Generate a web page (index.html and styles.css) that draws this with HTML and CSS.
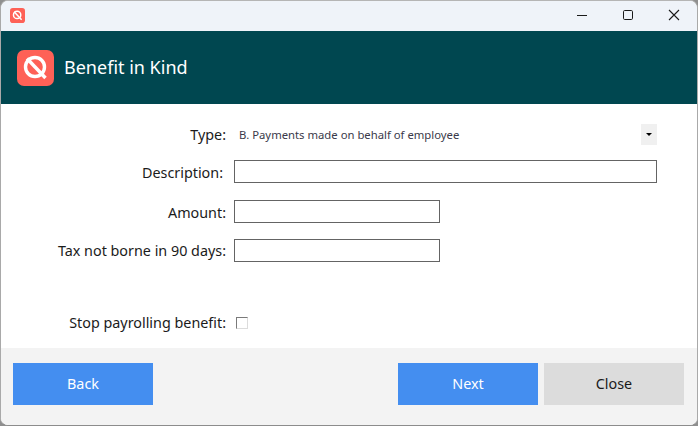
FILE: index.html
```html
<!DOCTYPE html>
<html lang="en">
<head>
<meta charset="utf-8">
<title>Benefit in Kind</title>
<link rel="stylesheet" href="styles.css">
</head>
<body>
<div class="window">
  <div class="titlebar">
    <svg class="app-icon" viewBox="0 0 16 16"><rect width="16" height="16" rx="3" fill="#fe6157"/><circle cx="7.6" cy="7.4" r="3.9" fill="none" stroke="#fff" stroke-width="1.6"/><path d="M4.4 3.9 12.4 12.6" stroke="#fff" stroke-width="1.6"/></svg>
    <div class="controls">
      <svg class="ctl" viewBox="0 0 46 30"><path d="M18 15.5H28" stroke="#1a1a1a" stroke-width="1"/></svg>
      <svg class="ctl" viewBox="0 0 46 30"><rect x="18.5" y="10.5" width="9" height="9" rx="1.2" fill="none" stroke="#1a1a1a" stroke-width="1"/></svg>
      <svg class="ctl" viewBox="0 0 46 30"><path d="M18 10 28 20M28 10 18 20" stroke="#1a1a1a" stroke-width="1.1"/></svg>
    </div>
  </div>
  <header class="banner">
    <svg class="logo" viewBox="0 0 37 36"><rect width="37" height="36" rx="7" fill="#fe6157"/><circle cx="18" cy="17" r="9.5" fill="none" stroke="#fff" stroke-width="3.4"/><path d="M10 8.5 28.5 28" stroke="#fff" stroke-width="3.4"/></svg>
    <h1 class="banner-title">Benefit in Kind</h1>
  </header>
  <main class="form">
    <div class="row row-type">
      <span class="label">Type:</span>
      <div class="select">
        <span class="select-text">B. Payments made on behalf of employee</span>
        <span class="select-arrow"></span>
      </div>
    </div>
    <div class="row row-desc">
      <span class="label label-desc">Description:</span>
      <input class="field field-wide" type="text">
    </div>
    <div class="row row-amount">
      <span class="label">Amount:</span>
      <input class="field field-short" type="text">
    </div>
    <div class="row row-tax">
      <span class="label">Tax not borne in 90 days:</span>
      <input class="field field-short" type="text">
    </div>
    <div class="row row-stop">
      <span class="label label-stop">Stop payrolling benefit:</span>
      <span class="check"></span>
    </div>
  </main>
  <footer class="footer">
    <button class="btn btn-blue" type="button">Back</button>
    <span class="spacer"></span>
    <button class="btn btn-blue" type="button">Next</button>
    <button class="btn btn-grey" type="button">Close</button>
  </footer>
</div>
</body>
</html>
```
FILE: styles.css
```css
* { box-sizing: border-box; }
html, body { margin: 0; height: 100%; background: #8f8f8f; }
body { font-family: "Noto Sans", "Open Sans", sans-serif; color: #1b1b1b; overflow: hidden; }
.window {
  width: 698px; height: 426px; display: flex; flex-direction: column;
  border-radius: 8px; overflow: hidden; border: 1px solid #a9a9a9; border-bottom-color: #8c8c8c; border-top: 1px solid #b5b5b5;
  background: #fff;
}
.titlebar { height: 30px; flex: none; background: #eff3f9; display: flex; align-items: center; justify-content: space-between; padding-left: 9px; }
.app-icon { width: 15px; height: 15px; display: block; margin-bottom: 1px; }
.controls { display: flex; margin-right: 0; margin-bottom: 2px; }
.ctl { width: 46px; height: 30px; display: block; }
.banner { height: 73px; flex: none; background: #004750; display: flex; align-items: center; padding-left: 16px; }
.logo { width: 37px; height: 36px; display: block; }
.banner-title { margin: 0 0 2px 10px; font-size: 18px; font-weight: 400; color: #fff; line-height: 24px; }
.form { flex: 1; display: flex; flex-direction: column; background: #fff; }
.row { display: grid; grid-template-columns: 225px auto; align-items: center; justify-content: start; }
.row-type { height: 23px; margin-top: 19px; }
.row-desc { height: 23px; margin-top: 14px; }
.row-amount { height: 23px; margin-top: 17px; }
.row-tax { height: 23px; margin-top: 16px; }
.row-stop { height: 23px; margin-top: 49px; }
.label { text-align: right; font-size: 14.35px; line-height: 20px; white-space: nowrap; }
.row-desc .label, .row-amount .label { padding-top: 2px; }
.label-desc { padding-right: 3px; }
.select { width: 423px; margin-left: 8px; height: 23px; display: flex; align-items: center; justify-content: space-between; padding-left: 5px; }
.select-text { font-size: 11.3px; color: #3a3a4a; }
.select-arrow { width: 16px; height: 21px; background: #f0f0f0; position: relative; display: block; }
.select-arrow::after { content: ""; position: absolute; left: 5px; top: 9px; border: 3px solid transparent; border-top: 3px solid #000; border-bottom: 0; }
.field { height: 23px; margin: 0 0 0 8px; padding: 0; border: 1px solid #646464; background: #fff; display: block; border-radius: 0; outline: 0; }
.field-wide { width: 423px; }
.field-short { width: 206px; }
.check { width: 12px; height: 12px; margin-left: 10px; border: 1px solid #dcdcdc; border-top-color: #7a7a7a; border-left-color: #7a7a7a; background: #fff; display: block; }
.footer { height: 77px; flex: none; background: #f3f3f3; display: flex; align-items: flex-start; padding: 15px 13px 0 12px; gap: 6px; }
.spacer { flex: 1; }
.btn { width: 140px; height: 42px; border: 0; border-radius: 0; font: 400 14.35px/20px "Noto Sans", "Open Sans", sans-serif; padding: 0; }
.btn-blue { background: #448ef0; color: #fff; }
.btn-grey { background: #dcdcdc; color: #1b1b1b; }
```
